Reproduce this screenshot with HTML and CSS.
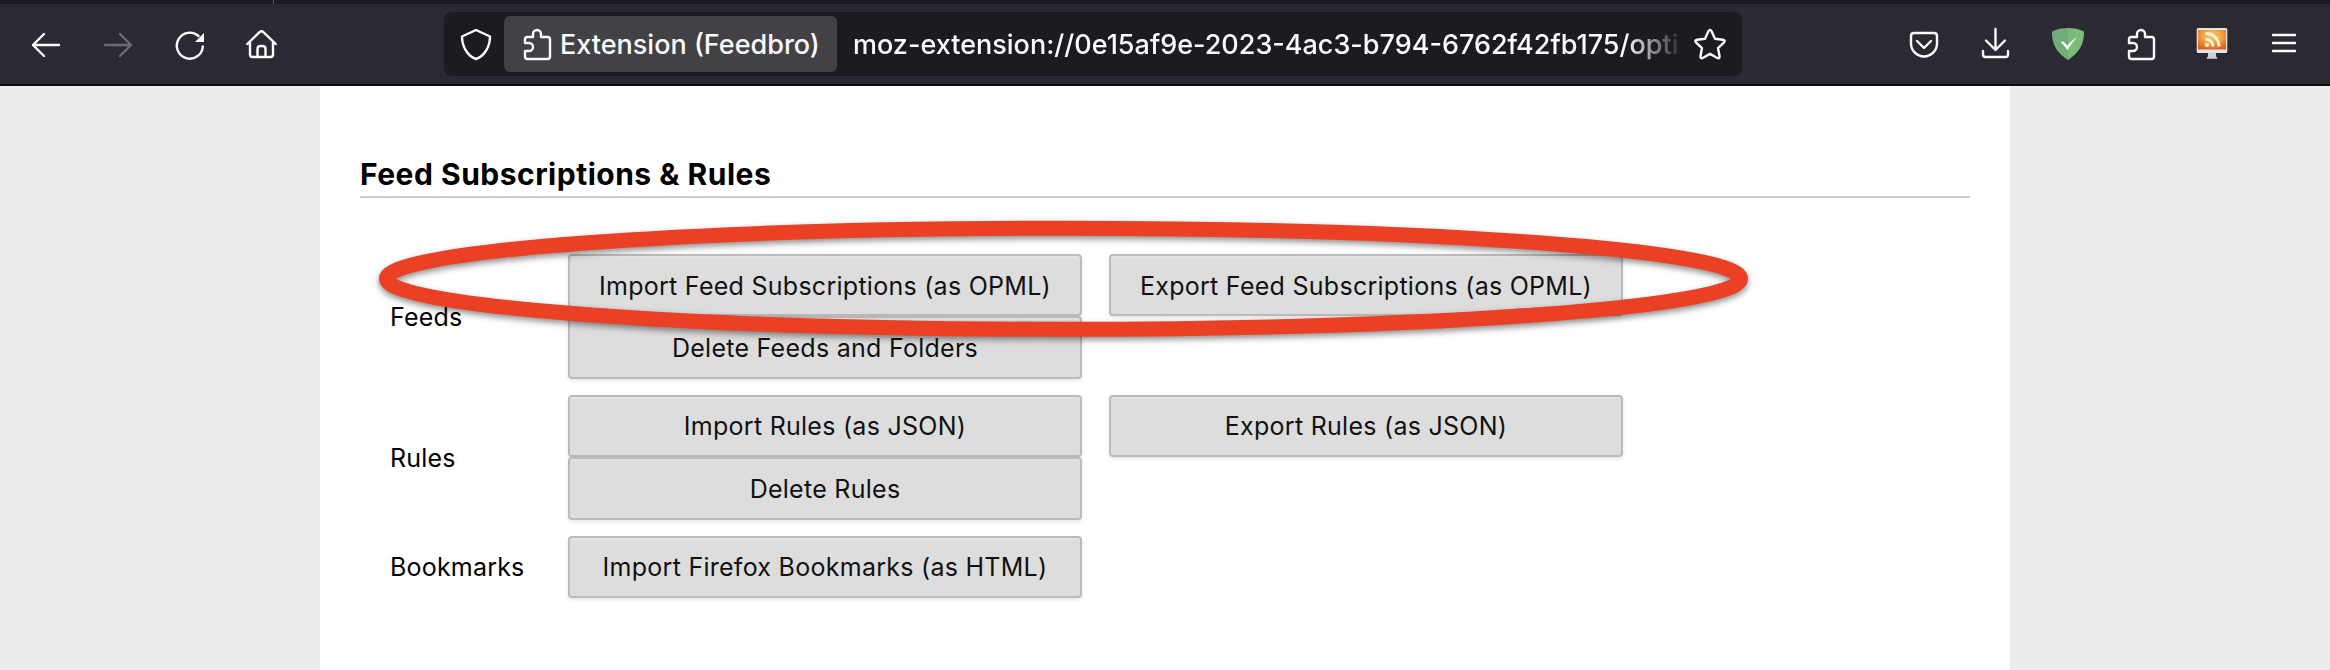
FILE: index.html
```html
<!DOCTYPE html>
<html lang="en">
<head>
<meta charset="utf-8">
<title>Feedbro Options</title>
<link rel="stylesheet" href="styles.css">
</head>
<body>
<div class="tabstrip"><span class="tab-divider"></span></div>
<header class="toolbar">
  <nav class="nav-icons">
    <svg class="icon" viewBox="0 0 32 32"><path d="M29 17H3M14 6 3 17l11 11"/></svg>
    <svg class="icon icon-disabled" viewBox="0 0 32 32"><path d="M3 17h26M18 6l11 11-11 11"/></svg>
    <svg class="icon" viewBox="0 0 32 32"><path d="M28.8 18.5A13 13 0 1 1 24.5 8"/><path class="solid" d="M30 5v9h-9z"/></svg>
    <svg class="icon" viewBox="0 0 32 32"><path d="M1.2 16 13.6 4.2q1.9-1.8 3.8 0L29.8 16M4 14v12.500q0 2.500 2.500 2.500h18q2.500 0 2.500-2.500V14M11.500 29v-8q0-3 3-3h2q3 0 3 3v8"/></svg>
  </nav>
  <div class="urlbar">
    <svg class="icon shield" viewBox="0 0 32 32"><path d="M16 2 30 8.500C30 18 25 28 16 31 7 28 2 18 2 8.500z"/></svg>
    <div class="identity">
      <svg class="icon" viewBox="0 0 32 32"><path d="M4 15V11.500Q4 9 6.500 9H12V6a4 4 0 0 1 8 0v3h6.500Q29 9 29 11.500v17Q29 31 26.500 31h-20Q4 31 4 28.500V23H8a4 4 0 0 0 0-8z"/></svg>
      <span class="identity-name">Extension (Feedbro)</span>
    </div>
    <div class="url">moz-extension://0e15af9e-2023-4ac3-b794-6762f42fb175/opti</div>
    <svg class="icon" viewBox="0 0 32 32"><path d="M14.300 3.500q1.700-3.300 3.400 0l3.300 7.200 7.800 1q3.200.6 1 3l-5.800 5.400 1.500 7.800q.4 3.400-2.600 1.800L16 25.900l-6.900 3.800q-3 1.600-2.600-1.800L8 20.100l-5.800-5.400q-2.200-2.400 1-3l7.800-1z"/></svg>
  </div>
  <div class="action-icons">
    <svg class="icon" viewBox="0 0 32 32"><path d="M3 8q0-3 3-3h20q3 0 3 3v7.500a13 13 0 0 1-26 0zM9 13l7 7 7-7"/></svg>
    <svg class="icon" viewBox="0 0 32 32"><path d="M15.500 1v20M6 12.500l9.500 9.500 9.500-9.500M3 23v3.500Q3 29 5.500 29h20q2.500 0 2.500-2.500V23"/></svg>
    <svg class="icon" viewBox="0 0 32 32"><path class="adguard-left" d="M16 0C10.500 0 4.500 1 0 3.500 0 8.500-.3 22 16 32z"/><path class="adguard-right" d="M16 0c5.500 0 11.500 1 16 3.500C32 8.500 32.300 22 16 32z"/><path class="solid" d="M9 14.200q1-1.400 2.700-.5l3.700 3.800Q20 12 24.900 9 20 15 15.600 22z"/></svg>
    <svg class="icon" viewBox="0 0 32 32"><path d="M5 15V11.500Q5 9 7.500 9H13V6a4 4 0 0 1 8 0v3h6.500Q30 9 30 11.500v17Q30 31 27.500 31h-20Q5 31 5 28.500V23H9a4 4 0 0 0 0-8z"/></svg>
    <svg class="icon" viewBox="0 0 32 32">
      <defs>
        <radialGradient id="screen" cx=".5" cy=".3" r=".75"><stop offset="0" stop-color="#f9cf68"/><stop offset=".5" stop-color="#efa13f"/><stop offset="1" stop-color="#d95c20"/></radialGradient>
      </defs>
      <path class="monitor-stand" d="M12 25h8v3l1.500 2.700h-11L12 28z"/>
      <rect class="monitor-frame" x=".7" width="30.600" height="25" rx="1.500"/>
      <rect x="2" y="2" width="28" height="19.500" fill="url(#screen)" stroke="none"/>
      <circle class="rss-dot" cx="11" cy="17" r="2.100"/>
      <path class="rss-wave" d="M9.500 11.300A7 7 0 0 1 17 18.500M9.500 5.500A13 13 0 0 1 23 18.500"/>
    </svg>
    <svg class="icon" viewBox="0 0 32 32"><path d="M5 7h22M5 15h22M5 23h22"/></svg>
  </div>
</header>
<main class="page">
  <h2 class="section-title">Feed Subscriptions &amp; Rules</h2>
  <div class="rows">
    <div class="row">
      <div class="label">Feeds</div>
      <div class="buttons">
        <button class="button button-low">Import Feed Subscriptions (as OPML)</button>
        <button class="button button-low">Export Feed Subscriptions (as OPML)</button>
        <button class="button button-tall">Delete Feeds and Folders</button>
      </div>
    </div>
    <div class="row">
      <div class="label">Rules</div>
      <div class="buttons">
        <button class="button">Import Rules (as JSON)</button>
        <button class="button">Export Rules (as JSON)</button>
        <button class="button button-tall">Delete Rules</button>
      </div>
    </div>
    <div class="row">
      <div class="label">Bookmarks</div>
      <div class="buttons">
        <button class="button">Import Firefox Bookmarks (as HTML)</button>
      </div>
    </div>
  </div>
  <svg class="highlight" viewBox="0 0 1400 140"><ellipse cx="693.500" cy="68.700" rx="677" ry="50.500"/></svg>
</main>
</body>
</html>
```
FILE: styles.css
```css
* { box-sizing: border-box; }

body {
  margin: 0;
  height: 670px;
  overflow: hidden;
  background: #ededed;
  font-family: Inter, "Liberation Sans", sans-serif;
}

.tabstrip {
  height: 4px;
  padding-left: 273px;
  background: #1c1b22;
}

.tab-divider {
  display: block;
  width: 1px;
  height: 4px;
  background: #55545c;
}

.toolbar {
  display: flex;
  align-items: center;
  height: 82px;
  padding: 0 30px;
  border-bottom: 2px solid #0c0c0d;
  background: #2b2a33;
  color: #fbfbfe;
}

.nav-icons,
.action-icons {
  display: flex;
  gap: 40px;
}

.action-icons { margin-left: auto; }

.icon {
  flex: none;
  display: block;
  width: 32px;
  height: 32px;
  overflow: visible;
  fill: none;
  stroke: #fbfbfe;
  stroke-width: 2.4;
  stroke-linecap: round;
  stroke-linejoin: round;
}

.icon-disabled { stroke: #6d6c73; }
.solid { fill: #fbfbfe; stroke: none; }
.adguard-left { fill: #74ab7c; stroke: none; }
.adguard-right { fill: #7abb78; stroke: none; }
.monitor-stand { fill: #c9ced6; stroke: none; }
.monitor-frame { fill: #dfe3e8; stroke: none; }
.rss-dot { fill: #fff3e4; stroke: none; }
.rss-wave { stroke: #fff3e4; stroke-width: 2.8; stroke-linecap: butt; }

.urlbar {
  display: flex;
  align-items: center;
  width: 1298px;
  height: 64px;
  margin-left: 166px;
  padding: 0 16px;
  border-radius: 8px;
  background: #1c1b22;
}

.identity {
  display: flex;
  align-items: center;
  width: 333px;
  height: 56px;
  margin-left: 12px;
  padding-left: 17px;
  gap: 7px;
  border-radius: 6px;
  background: #424145;
}

.identity-name,
.url {
  padding-top: 2px;
  font-size: 27px;
  font-weight: 500;
  line-height: 40px;
  white-space: nowrap;
}

.url {
  width: 828px;
  margin: 0 13px 0 16px;
  -webkit-mask-image: linear-gradient(to right, #000 772px, transparent 832px);
  mask-image: linear-gradient(to right, #000 772px, transparent 832px);
}

.page {
  position: relative;
  width: 1690px;
  height: 584px;
  margin: 0 auto;
  padding: 69px 40px 0;
  background: #fff;
  color: #000;
}

.section-title {
  height: 43px;
  margin: 0;
  border-bottom: 2px solid #ccc;
  font-size: 30px;
  font-weight: 700;
  letter-spacing: .5px;
  line-height: 38px;
}

.rows {
  display: grid;
  gap: 16px;
  padding: 56px 0 0 30px;
}

.row {
  display: flex;
  align-items: center;
}

.label {
  width: 178px;
  font-size: 25px;
  letter-spacing: .2px;
  line-height: 32px;
}

.buttons {
  display: grid;
  grid-template-columns: 514px 514px;
  column-gap: 27px;
}

.button {
  height: 62px;
  padding: 0;
  border: 2px solid #bbb;
  border-radius: 4px;
  background: #ddd;
  box-shadow: inset 0 2px 0 #e4e4e4, 0 2px 4px rgba(0, 0, 0, .1);
  color: #111;
  font-family: inherit;
  font-size: 25px;
  letter-spacing: .27px;
  line-height: 32px;
  white-space: nowrap;
}

.button-low { padding-top: 2px; }

.button-tall {
  height: 63px;
  padding-top: 1px;
}

/* Hand-drawn marker lying over the first row of buttons */
.highlight {
  position: absolute;
  top: 124px;
  left: 50px;
  width: 1400px;
  height: 140px;
  overflow: visible;
  pointer-events: none;
  fill: none;
  stroke: #ea4025;
  stroke-width: 15;
  filter: drop-shadow(0 3px 3px rgba(0, 0, 0, .45));
}
```
